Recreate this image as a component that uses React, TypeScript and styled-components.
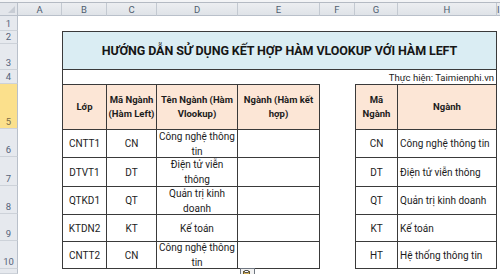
import React from "react";
import styled, { createGlobalStyle } from "styled-components";

const GlobalStyle = createGlobalStyle`
  html, body {
    margin: 0;
    padding: 0;
    background: #ffffff;
  }
  body {
    font-family: Roboto, "Noto Sans", "Liberation Sans", sans-serif;
  }
`;

const Sheet = styled.div`
  position: relative;
  width: 500px;
  height: 274px;
  overflow: hidden;
  display: grid;
  grid-template-columns: 18px 44px 45px 50px 81px 82px 35px 43px 99px 1fr;
  grid-template-rows: 3px 13px 15px 13px 26px 14px 45px 28px 29px 28px 27px 28px 1fr;
  background: #ffffff;
  color: #1c1c1c;
`;

const TopStrip = styled.div`
  grid-column: 1 / -1;
  grid-row: 1;
  background: #f3f4f6;
  border-bottom: 1px solid #b4bac3;
`;

const Corner = styled.div`
  grid-column: 1;
  grid-row: 2;
  position: relative;
  background: #e3e6eb;
  border-right: 1px solid #b9c0ca;
  border-bottom: 1px solid #b9c0ca;

  &::after {
    content: "";
    position: absolute;
    right: 2px;
    bottom: 2px;
    border-left: 7px solid transparent;
    border-bottom: 7px solid #c7ccd4;
  }
`;

const ColHead = styled.div<{ $col: number }>`
  grid-column: ${(p) => p.$col};
  grid-row: 2;
  display: flex;
  align-items: center;
  justify-content: center;
  background: linear-gradient(#eceef1, #dfe3e8);
  border-right: 1px solid #c3c9d1;
  border-bottom: 1px solid #b9c0ca;
  font-size: 9.5px;
  color: #4e5d70;
`;

const RowHead = styled.div<{ $row: number; $active?: boolean }>`
  grid-column: 1;
  grid-row: ${(p) => p.$row};
  display: flex;
  align-items: flex-end;
  justify-content: center;
  padding-bottom: 1px;
  box-sizing: border-box;
  background: ${(p) => (p.$active ? "#fbe08c" : "#e6e9ee")};
  border-right: 1px solid #b9c0ca;
  border-bottom: 1px solid #cdd2d9;
  font-size: 9.5px;
  color: ${(p) => (p.$active ? "#7a6c48" : "#55637a")};
`;

const TitleCell = styled.div`
  grid-column: 3 / 10;
  grid-row: 4 / 6;
  display: flex;
  align-items: center;
  justify-content: center;
  background: #daedf3;
  border: 1px solid #3a3a3a;
  font-size: 12.5px;
  font-weight: 700;
  color: #161616;
  letter-spacing: -0.1px;
`;

const CreditCell = styled.div`
  grid-column: 3 / 10;
  grid-row: 6;
  display: flex;
  align-items: center;
  justify-content: flex-end;
  padding-right: 2px;
  border-left: 1px solid #3a3a3a;
  border-right: 1px solid #3a3a3a;
  font-size: 9.5px;
  color: #1c1c1c;
`;

const Cell = styled.div<{
  $col: number;
  $row: number;
  $head?: boolean;
  $left?: boolean;
  $alignLeft?: boolean;
}>`
  grid-column: ${(p) => p.$col};
  grid-row: ${(p) => p.$row};
  display: flex;
  align-items: center;
  justify-content: ${(p) => (p.$alignLeft ? "flex-start" : "center")};
  text-align: ${(p) => (p.$alignLeft ? "left" : "center")};
  padding: 0 ${(p) => (p.$alignLeft ? "2px" : "0")};
  box-sizing: border-box;
  white-space: pre-line;
  background: ${(p) => (p.$head ? "#fce6d6" : "#ffffff")};
  border-top: 1px solid #3a3a3a;
  border-right: 1px solid #3a3a3a;
  border-left: ${(p) => (p.$left ? "1px solid #3a3a3a" : "none")};
  border-bottom: ${(p) => (p.$row === 12 ? "1px solid #3a3a3a" : "none")};
  font-size: ${(p) => (p.$head ? "9.5px" : "10px")};
  font-weight: ${(p) => (p.$head ? 700 : 400)};
  line-height: ${(p) => (p.$head ? "14px" : "15px")};
  color: #1c1c1c;
`;

const PasteButton = styled.div`
  position: absolute;
  left: 240px;
  top: 268px;
  width: 15px;
  height: 12px;
  box-sizing: border-box;
  border: 1px solid #6f7680;
  background: #f3f3f3;
  display: flex;
  align-items: flex-start;
  justify-content: center;
  padding-top: 1px;
`;

const columns = ["A", "B", "C", "D", "E", "F", "G", "H", "I"];

const headers = [
  { col: 3, text: "Lớp", left: true },
  { col: 4, text: "Mã Ngành\n(Hàm Left)" },
  { col: 5, text: "Tên Ngành (Hàm\nVlookup)" },
  { col: 6, text: "Ngành (Hàm kết\nhợp)" },
  { col: 8, text: "Mã\nNgành", left: true },
  { col: 9, text: "Ngành" },
];

const mainRows = [
  ["CNTT1", "CN", "Công nghệ thông\ntin"],
  ["DTVT1", "DT", "Điện tử viễn\nthông"],
  ["QTKD1", "QT", "Quản trị kinh\ndoanh"],
  ["KTDN2", "KT", "Kế toán"],
  ["CNTT2", "CN", "Công nghệ thông\ntin"],
];

const lookupRows = [
  ["CN", "Công nghệ thông tin"],
  ["DT", "Điện tử viễn thông"],
  ["QT", "Quản trị kinh doanh"],
  ["KT", "Kế toán"],
  ["HT", "Hệ thống thông tin"],
];

export default function App() {
  return (
    <>
      <GlobalStyle />
      <Sheet>
        <TopStrip />
        <Corner />
        {columns.map((c, i) => (
          <ColHead key={c} $col={i + 2}>
            {c}
          </ColHead>
        ))}
        {Array.from({ length: 11 }, (_, i) => (
          <RowHead key={i} $row={i + 3} $active={i === 4}>
            {i < 10 ? i + 1 : ""}
          </RowHead>
        ))}

        <TitleCell>HƯỚNG DẪN SỬ DỤNG KẾT HỢP HÀM VLOOKUP VỚI HÀM LEFT</TitleCell>
        <CreditCell>Thực hiện: Taimienphi.vn</CreditCell>

        {headers.map((h) => (
          <Cell key={h.col} $col={h.col} $row={7} $head $left={h.left}>
            {h.text}
          </Cell>
        ))}

        {mainRows.map(([lop, ma, ten], i) => (
          <React.Fragment key={lop}>
            <Cell $col={3} $row={i + 8} $left>
              {lop}
            </Cell>
            <Cell $col={4} $row={i + 8}>
              {ma}
            </Cell>
            <Cell $col={5} $row={i + 8}>
              {ten}
            </Cell>
            <Cell $col={6} $row={i + 8} />
          </React.Fragment>
        ))}

        {lookupRows.map(([ma, nganh], i) => (
          <React.Fragment key={ma}>
            <Cell $col={8} $row={i + 8} $left>
              {ma}
            </Cell>
            <Cell $col={9} $row={i + 8} $alignLeft>
              {nganh}
            </Cell>
          </React.Fragment>
        ))}

        <PasteButton>
          <svg width="9" height="9" viewBox="0 0 9 9">
            <rect x="0.5" y="1.5" width="6" height="7" fill="#d9b45a" stroke="#6b5a2a" strokeWidth="1" />
            <rect x="2" y="0.5" width="3" height="2" fill="#ffffff" stroke="#555" strokeWidth="1" />
          </svg>
        </PasteButton>
      </Sheet>
    </>
  );
}
